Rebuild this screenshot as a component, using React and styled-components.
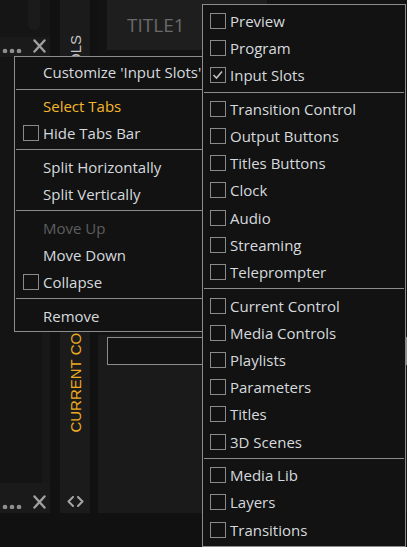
import React from 'react';
import styled, { createGlobalStyle } from 'styled-components';

const GlobalStyle = createGlobalStyle`
  html, body { margin: 0; padding: 0; background: #111111; }
  body {
    width: 407px; height: 547px; overflow: hidden;
    font-family: "Open Sans", "Noto Sans", sans-serif;
  }
`;

const Screen = styled.div`
  position: relative;
  width: 407px;
  height: 547px;
  background: #111111;
  display: flex;
  align-items: flex-start;
  overflow: hidden;
`;

/* ---------- background: left panel column ---------- */
const SideColumn = styled.div`
  width: 50px;
  height: 513px;
  display: flex;
  flex-direction: column;
  background: #181818;
`;

const TopArea = styled.div`
  height: 37px;
  background: #151515;
  display: flex;
  padding-left: 28px;
`;

const ScrollThumb = styled.div`
  width: 12px;
  height: 30px;
  background: #1b1b1b;
  border-radius: 0 0 5px 5px;
`;

const PanelBar = styled.div`
  height: ${p => p.$h}px;
  box-sizing: border-box;
  display: flex;
  align-items: flex-start;
  gap: 10px;
  padding: ${p => p.$pt}px 0 0 2px;
  background: #1a1a1a;
`;

const PanelBody = styled.div`
  flex: 1;
  background: #141414;
  margin-right: 8px;
`;

/* ---------- vertical tab strip ---------- */
const TabStrip = styled.div`
  width: 30px;
  height: 513px;
  margin-left: 10px;
  background: #1b1b1b;
  display: flex;
  flex-direction: column;
  align-items: center;
`;

const VerticalLabel = styled.div`
  writing-mode: vertical-rl;
  transform: rotate(180deg);
  font-family: "Liberation Sans", Arial, sans-serif;
  font-size: 15px;
  line-height: 15px;
  white-space: nowrap;
  color: ${p => p.$color};
  margin-top: ${p => p.$mt || 0}px;
`;

const Spacer = styled.div`
  flex: 1;
`;

const ChevronRow = styled.div`
  height: 80px;
  box-sizing: border-box;
  display: flex;
  align-items: flex-end;
  padding-bottom: 6px;
`;

/* ---------- main area ---------- */
const MainColumn = styled.div`
  flex: 1;
  height: 513px;
  margin-left: 8px;
  display: flex;
  flex-direction: column;
`;

const TitleRow = styled.div`
  height: 50px;
  display: flex;
  padding-left: 9px;
  background: #131313;
`;

const TitleTab = styled.div`
  width: 140px;
  background: #1e1e1e;
  color: #6a6a6a;
  font-size: 19px;
  line-height: 50px;
  padding-left: 20px;
`;

const MidArea = styled.div`
  height: 285px;
  background: #131313;
`;

const BottomPanel = styled.div`
  flex: 1;
  background: #1a1a1a;
  padding: 2px 0 0 9px;
`;

const InputBox = styled.div`
  height: 28px;
  box-sizing: border-box;
  border: 1px solid #8c8c8c;
  background: #121212;
`;

/* ---------- menus ---------- */
const Menu = styled.div`
  position: absolute;
  left: ${p => p.$left}px;
  top: ${p => p.$top}px;
  width: ${p => p.$width}px;
  box-sizing: border-box;
  border: 1px solid #8c8c8c;
  background: #121212;
  padding: ${p => p.$pt}px 0 ${p => p.$pb}px;
  z-index: ${p => p.$z};
`;

const Item = styled.div`
  height: 27.2px;
  display: flex;
  align-items: center;
  gap: 4px;
  padding-left: ${p => p.$pl}px;
  font-size: 15px;
  white-space: nowrap;
  color: ${p => (p.$variant === 'accent' ? '#f4b72a' : p.$variant === 'disabled' ? '#5e5e5e' : '#d6dade')};
`;

const Check = styled.span`
  width: 16px;
  height: 16px;
  box-sizing: border-box;
  flex: none;
  border: ${p => (p.$hidden ? 'none' : '1px solid #8a8a8a')};
  display: flex;
  align-items: center;
  justify-content: center;
`;

const Separator = styled.div`
  height: 1px;
  margin: 2.75px 1px;
  background: #8c8c8c;
`;

const Dots = () => (
  <svg width="21" height="14" viewBox="0 0 21 14">
    {[3, 10, 17].map(cx => (
      <circle key={cx} cx={cx} cy="12" r="2.3" fill="#8e8e8e" />
    ))}
  </svg>
);

const Cross = () => (
  <svg width="13" height="14" viewBox="0 0 13 14">
    <path d="M1.5 1.5 L11.5 12.5 M11.5 1.5 L1.5 12.5" stroke="#a0a0a0" strokeWidth="2.4" strokeLinecap="round" />
  </svg>
);

const Chevrons = () => (
  <svg width="19" height="11" viewBox="0 0 19 11">
    <path d="M7 1 L2.5 5.5 L7 10 M12 1 L16.5 5.5 L12 10" stroke="#a6a6a6" strokeWidth="2" fill="none" strokeLinecap="round" strokeLinejoin="round" />
  </svg>
);

const Tick = () => (
  <svg width="12" height="12" viewBox="0 0 12 12">
    <path d="M1.5 6 L4.5 9 L10 2.5" stroke="#c2c2c2" strokeWidth="1.6" fill="none" />
  </svg>
);

const MenuItem = ({ label, box, checked, variant, pl }) => (
  <Item $variant={variant} $pl={pl}>
    <Check $hidden={!box}>{checked && <Tick />}</Check>
    <span>{label}</span>
  </Item>
);

const leftMenu = [
  [{ label: "Customize 'Input Slots'" }],
  [{ label: 'Select Tabs', variant: 'accent' }, { label: 'Hide Tabs Bar', box: true }],
  [{ label: 'Split Horizontally' }, { label: 'Split Vertically' }],
  [{ label: 'Move Up', variant: 'disabled' }, { label: 'Move Down' }, { label: 'Collapse', box: true }],
  [{ label: 'Remove' }],
];

const rightMenu = [
  ['Preview', 'Program', 'Input Slots'],
  ['Transition Control', 'Output Buttons', 'Titles Buttons', 'Clock', 'Audio', 'Streaming', 'Teleprompter'],
  ['Current Control', 'Media Controls', 'Playlists', 'Parameters', 'Titles', '3D Scenes'],
  ['Media Lib', 'Layers', 'Transitions'],
];

export default function App() {
  return (
    <>
      <GlobalStyle />
      <Screen>
        <SideColumn>
          <TopArea>
            <ScrollThumb />
          </TopArea>
          <PanelBar $h={20} $pt={2}>
            <Dots />
            <Cross />
          </PanelBar>
          <PanelBody />
          <PanelBar $h={30} $pt={12}>
            <Dots />
            <Cross />
          </PanelBar>
        </SideColumn>

        <TabStrip>
          <VerticalLabel $color="#c6c6c6" $mt={35}>MEDIA CONTROLS</VerticalLabel>
          <Spacer />
          <VerticalLabel $color="#eeaa22">CURRENT CONTROLS</VerticalLabel>
          <ChevronRow>
            <Chevrons />
          </ChevronRow>
        </TabStrip>

        <MainColumn>
          <TitleRow>
            <TitleTab>TITLE1</TitleTab>
          </TitleRow>
          <MidArea />
          <BottomPanel>
            <InputBox />
          </BottomPanel>
        </MainColumn>

        <Menu $left={14} $top={56} $width={230} $pt={1.6} $pb={1.8} $z={1}>
          {leftMenu.map((group, gi) => (
            <React.Fragment key={gi}>
              {gi > 0 && <Separator />}
              {group.map(it => (
                <MenuItem key={it.label} {...it} pl={8} />
              ))}
            </React.Fragment>
          ))}
        </Menu>

        <Menu $left={202} $top={4} $width={204} $pt={2.2} $pb={2.8} $z={2}>
          {rightMenu.map((group, gi) => (
            <React.Fragment key={gi}>
              {gi > 0 && <Separator />}
              {group.map(label => (
                <MenuItem key={label} label={label} box checked={label === 'Input Slots'} pl={7} />
              ))}
            </React.Fragment>
          ))}
        </Menu>
      </Screen>
    </>
  );
}
